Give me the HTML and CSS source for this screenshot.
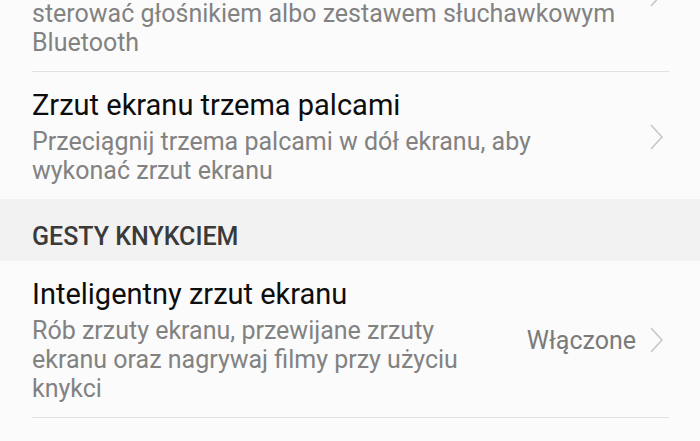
FILE: index.html
```html
<!DOCTYPE html>
<html lang="pl">
<head>
    <meta charset="UTF-8">
    <meta name="viewport" content="width=device-width, initial-scale=1.0">
    <title>Ruchy i gesty</title>
    <link rel="stylesheet" href="styles.css">
</head>
<body>
    <div class="screen">
        <div class="list">
            <div class="item">
                <div class="item-text">
                    <div class="item-title">Podnieś do ucha</div>
                    <div class="item-summary">Przyłóż telefon do ucha przy rozmowie, by przestać sterować głośnikiem albo zestawem słuchawkowym Bluetooth</div>
                </div>
                <svg class="chevron" viewBox="0 0 13 26" width="13" height="26">
                    <path d="M1 1 L12 13 L1 25" />
                </svg>
            </div>

            <div class="item item-last">
                <div class="item-text">
                    <div class="item-title">Zrzut ekranu trzema palcami</div>
                    <div class="item-summary">Przeciągnij trzema palcami w dół ekranu, aby wykonać zrzut ekranu</div>
                </div>
                <svg class="chevron" viewBox="0 0 13 26" width="13" height="26">
                    <path d="M1 1 L12 13 L1 25" />
                </svg>
            </div>

            <div class="section-header">GESTY KNYKCIEM</div>

            <div class="item">
                <div class="item-text">
                    <div class="item-title">Inteligentny zrzut ekranu</div>
                    <div class="item-summary">Rób zrzuty ekranu, przewijane zrzuty ekranu oraz nagrywaj filmy przy użyciu knykci</div>
                </div>
                <div class="item-value">Włączone</div>
                <svg class="chevron" viewBox="0 0 13 26" width="13" height="26">
                    <path d="M1 1 L12 13 L1 25" />
                </svg>
            </div>
        </div>
    </div>
</body>
</html>
```

FILE: styles.css
```css
body {
    margin: 0;
    font-family: Roboto, "Noto Sans", sans-serif;
    background-color: #fbfbfb;
    color: #0d0d0d;
}
.screen {
    width: 700px;
    height: 441px;
    overflow: hidden;
}
/* list is scrolled so the first item is only partly visible */
.list {
    margin-top: -85px;
}
.item {
    display: flex;
    align-items: center;
    margin: 0 31px 0 32px;
    padding: 16px 0 14px;
    border-bottom: 1px solid #e2e2e2;
}
.item-last {
    border-bottom: none;
}
.item-text {
    flex: 1;
    min-width: 0;
}
.item-title {
    font-size: 29px;
    line-height: 34px;
    margin-bottom: 5px;
}
.item-summary {
    font-size: 25px;
    line-height: 29px;
    color: #828282;
}
.item-value {
    font-size: 25px;
    line-height: 29px;
    color: #7a7a7a;
    margin-left: 24px;
}
.chevron {
    flex: none;
    margin-left: 14px;
    margin-right: 6px;
}
.item-text + .chevron {
    margin-left: 20px;
}
.chevron path {
    fill: none;
    stroke: #c6c6c6;
    stroke-width: 1.6;
}
.section-header {
    background-color: #f2f2f2;
    padding: 23px 32px 9px;
    font-size: 25px;
    line-height: 30px;
    font-weight: 500;
    color: #3a3a3a;
}
```
